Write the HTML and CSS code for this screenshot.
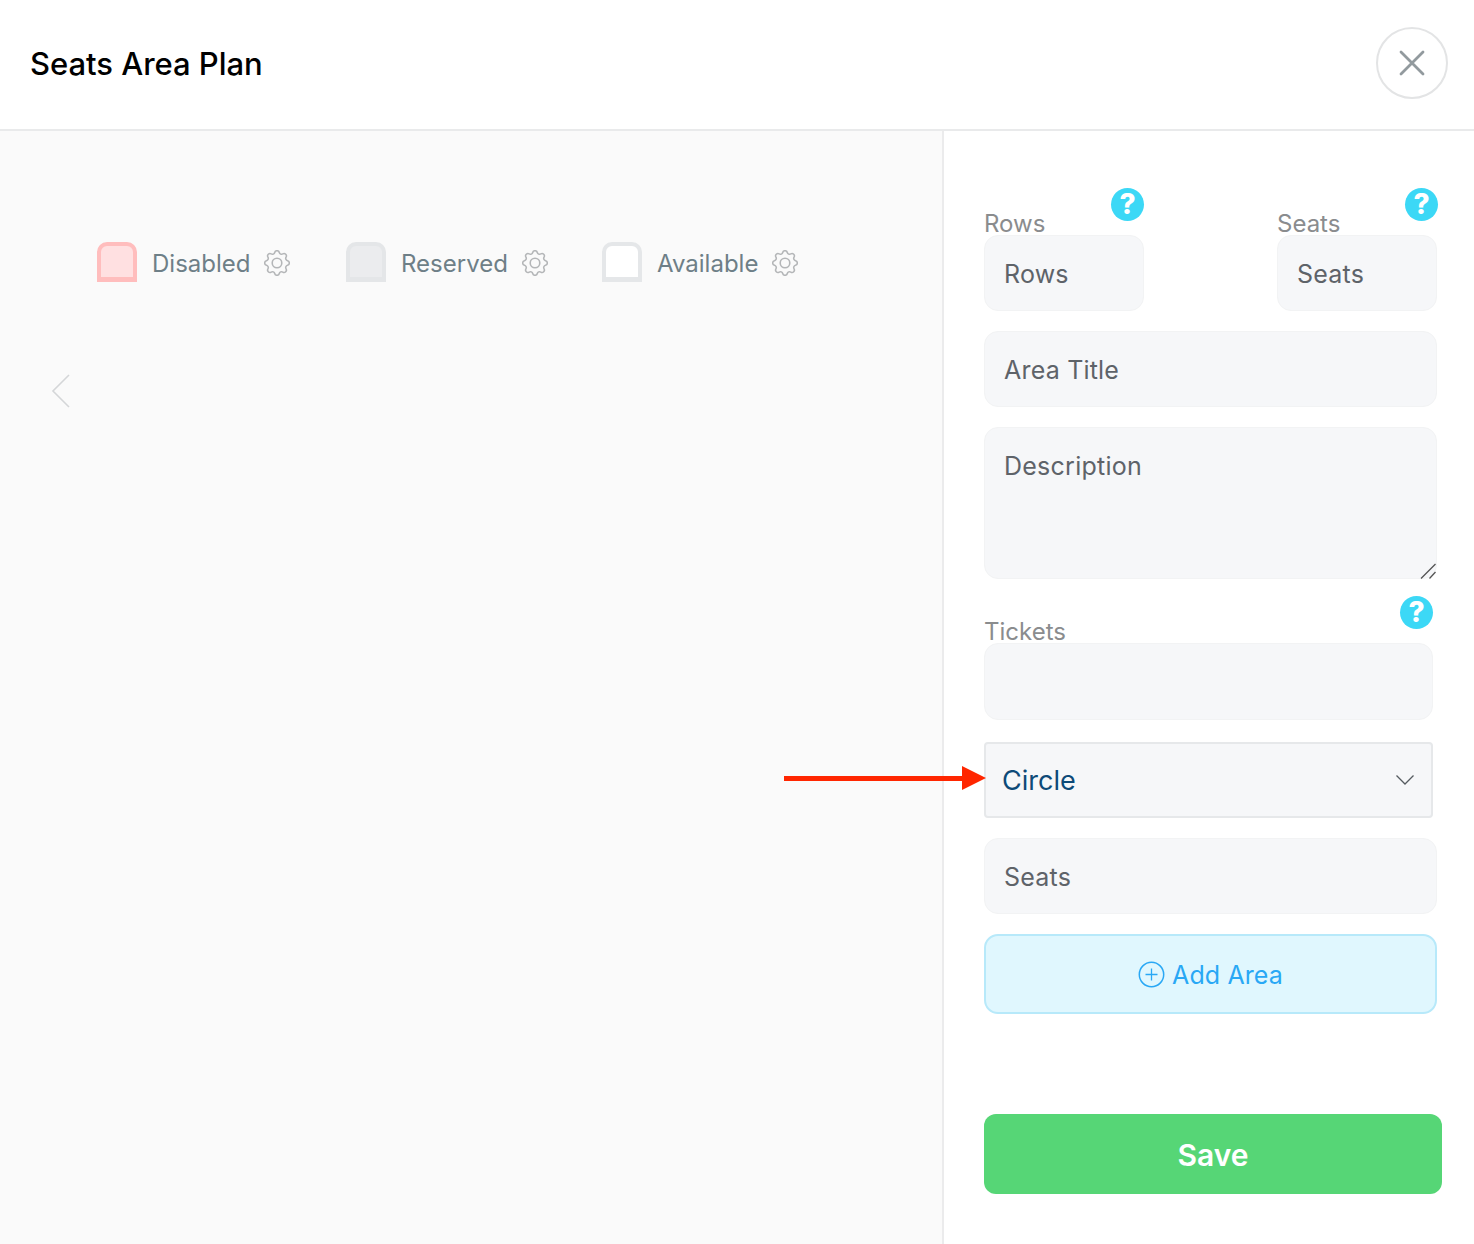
FILE: index.html
```html
<!DOCTYPE html>
<html lang="en">
<head>
<meta charset="utf-8">
<title>Seats Area Plan</title>
<link rel="stylesheet" href="styles.css">
</head>
<body>
<header class="header">
  <h1 class="title">Seats Area Plan</h1>
  <button class="close" aria-label="Close">
    <svg width="26" height="26" viewBox="0 0 26 26"><path d="M2 2 L24 24 M24 2 L2 24" stroke="#929a9e" stroke-width="2.8" stroke-linecap="round" fill="none"/></svg>
  </button>
</header>
<main class="body">
  <section class="canvas">
    <div class="legend">
      <div class="legend-item item-disabled">
        <span class="swatch swatch-disabled"></span><span class="legend-label">Disabled</span>
        <svg class="gear" viewBox="2.5 2.5 19 19"><use href="#gear"/></svg>
      </div>
      <div class="legend-item item-reserved">
        <span class="swatch swatch-reserved"></span><span class="legend-label">Reserved</span>
        <svg class="gear" viewBox="2.5 2.5 19 19"><use href="#gear"/></svg>
      </div>
      <div class="legend-item item-available">
        <span class="swatch swatch-available"></span><span class="legend-label">Available</span>
        <svg class="gear" viewBox="2.5 2.5 19 19"><use href="#gear"/></svg>
      </div>
    </div>
    <svg class="prev" width="20" height="34" viewBox="0 0 20 34"><path d="M18 1 L2 17 L18 33" stroke="#d4d6d8" stroke-width="1.6" fill="none"/></svg>
    <svg class="arrow" width="202" height="24" viewBox="0 0 202 24"><path d="M0 10 H178 V0 L202 12 L178 24 V15 H0 Z" fill="#ff2600"/></svg>
  </section>
  <aside class="side">
    <div class="pair">
      <div class="small-field">
        <div class="head"><span class="label">Rows</span><span class="help help-flush">?</span></div>
        <div class="input">Rows</div>
      </div>
      <div class="small-field">
        <div class="head"><span class="label">Seats</span><span class="help">?</span></div>
        <div class="input">Seats</div>
      </div>
    </div>
    <div class="input input-full gap-area">Area Title</div>
    <div class="textarea-wrap">
      <textarea class="textarea">Description</textarea>
      <svg class="resizer" width="16" height="16" viewBox="0 0 16 16"><path d="M1 15.5 L15.5 1 M9.5 15.5 L15.5 9" stroke="#555" stroke-width="1.3" fill="none"/></svg>
    </div>
    <div class="tickets">
      <div class="head"><span class="label">Tickets</span><span class="help help-flush">?</span></div>
      <div class="input"></div>
    </div>
    <div class="select"><span>Circle</span>
      <svg width="20" height="12" viewBox="0 0 20 12"><path d="M1.5 1.5 L10 10 L18.5 1.5" stroke="#555b60" stroke-width="1.3" fill="none"/></svg>
    </div>
    <div class="input input-full gap-seats">Seats</div>
    <button class="add">
      <svg width="27" height="27" viewBox="0 0 27 27"><circle cx="13.5" cy="13.5" r="12.2" stroke="#29a8f5" stroke-width="1.5" fill="none"/><path d="M13.5 7.5 V19.5 M7.5 13.5 H19.5" stroke="#29a8f5" stroke-width="1.3"/></svg>
      <span class="add-label">Add Area</span>
    </button>
    <button class="save">Save</button>
  </aside>
</main>
<svg class="defs" width="0" height="0">
  <defs>
    <g id="gear" fill="none" stroke="#b4b6b8" stroke-width="1.15" stroke-linejoin="round">
      <circle cx="12" cy="12" r="3.5"/>
      <path d="M10.325 4.317c.426-1.756 2.924-1.756 3.35 0a1.724 1.724 0 002.573 1.066c1.543-.94 3.31.826 2.37 2.37a1.724 1.724 0 001.065 2.572c1.756.426 1.756 2.924 0 3.35a1.724 1.724 0 00-1.066 2.573c.94 1.543-.826 3.31-2.37 2.37a1.724 1.724 0 00-2.572 1.065c-.426 1.756-2.924 1.756-3.35 0a1.724 1.724 0 00-2.573-1.066c-1.543.94-3.31-.826-2.37-2.37a1.724 1.724 0 00-1.065-2.572c-1.756-.426-1.756-2.924 0-3.35a1.724 1.724 0 001.066-2.573c-.94-1.543.826-3.31 2.37-2.37.996.608 2.296.07 2.572-1.065z"/>
    </g>
  </defs>
</svg>
</body>
</html>
```

FILE: styles.css
```css
* { box-sizing: border-box; }
html, body { margin: 0; padding: 0; }
body {
  width: 1474px;
  height: 1244px;
  overflow: hidden;
  background: #fff;
  font-family: Inter, "Liberation Sans", sans-serif;
}
button { font-family: inherit; cursor: pointer; }
.defs { position: absolute; }

.header {
  height: 131px;
  padding: 27px 26px 0 30px;
  display: flex;
  justify-content: space-between;
  align-items: flex-start;
  border-bottom: 2px solid #e9eaeb;
}
.title {
  margin: 16px 0 0;
  font-size: 31px;
  line-height: 42px;
  font-weight: 500;
  color: #000;
  letter-spacing: -0.03px;
}
.close {
  width: 72px;
  height: 72px;
  border: 2px solid #e3e4e5;
  border-radius: 50%;
  background: #fff;
  padding: 0;
  display: flex;
  align-items: center;
  justify-content: center;
}

.body { display: flex; height: 1113px; }

.canvas {
  position: relative;
  width: 944px;
  background: #fafafa;
  border-right: 2px solid #ebebec;
  padding: 111px 0 0 97px;
}
.legend { display: flex; align-items: center; }
.legend-item { display: flex; align-items: center; height: 40px; }
.item-disabled { width: 249px; }
.item-reserved { width: 256px; }
.swatch {
  width: 40px;
  height: 40px;
  border: 4px solid;
  border-bottom-width: 5px;
  border-radius: 10px 10px 0 0;
}
.swatch-disabled { background: #ffe0e1; border-color: #ffbdbd; }
.swatch-reserved { background: #ebecee; border-color: #e4e6e8; }
.swatch-available { background: #fff; border-color: #e5e7e9; }
.legend-label {
  margin-left: 15px;
  padding-top: 3px;
  font-size: 24px;
  line-height: 37px;
  color: #6e7f87;
}
.gear { width: 26px; height: 26px; margin: 2px 0 0 14px; }
.prev { position: absolute; left: 51px; top: 243px; }
.arrow { position: absolute; left: 784px; top: 635px; z-index: 2; }

.side { width: 530px; padding: 57px 37px 0 40px; display: flex; flex-direction: column; align-items: flex-start; }
.pair { width: 453px; display: flex; justify-content: space-between; }
.small-field { width: 160px; }
.head { height: 47px; display: flex; justify-content: space-between; align-items: flex-start; }
.label {
  align-self: flex-end;
  font-size: 24px;
  line-height: 24px;
  margin-bottom: -1px;
  color: #8a8c8e;
}
.help {
  width: 33px;
  height: 33px;
  margin-right: -1px;
  border-radius: 50%;
  background: #3cd8f6;
  color: #fff;
  font-size: 28px;
  line-height: 33px;
  font-weight: 800;
  text-align: center;
}
.help-flush { margin-right: 0; }
.input {
  height: 76px;
  padding: 0 19px;
  background: #f6f7f9;
  border: 1px solid #f2f3f4;
  border-radius: 14px;
  font-size: 25px;
  line-height: 76px;
  letter-spacing: 0.2px;
  color: #5e6369;
}
.input-full { width: 453px; }
.gap-area { margin-top: 20px; }
.textarea-wrap { position: relative; width: 453px; height: 152px; margin-top: 20px; }
.textarea {
  display: block;
  width: 100%;
  height: 100%;
  padding: 20px 19px;
  background: #f6f7f9;
  border: 1px solid #f2f3f4;
  border-radius: 14px;
  outline: none;
  resize: none;
  font-family: inherit;
  font-size: 25px;
  line-height: 36px;
  letter-spacing: 0.25px;
  color: #5e6369;
}
.resizer { position: absolute; right: 1px; bottom: 0; }
.tickets { width: 449px; margin-top: 17px; }
.tickets .input { height: 77px; }
.select {
  width: 449px;
  height: 76px;
  margin-top: 22px;
  padding: 0 16px;
  display: flex;
  align-items: center;
  justify-content: space-between;
  background: #f6f7f9;
  border: 2px solid #e6e8ea;
  border-radius: 4px;
  font-size: 27px;
  color: #0d4a78;
}
.gap-seats { margin-top: 20px; }
.add {
  width: 453px;
  height: 80px;
  margin-top: 20px;
  display: flex;
  align-items: center;
  justify-content: center;
  gap: 7px;
  padding: 0;
  background: #e0f7fe;
  border: 2px solid #b7e9fa;
  border-radius: 14px;
  font-size: 25px;
  letter-spacing: 0.1px;
  color: #29a8f5;
}
.add-label { padding-top: 2px; }
.save {
  width: 458px;
  height: 80px;
  margin-top: 100px;
  border: 0;
  border-radius: 12px;
  background: #56d676;
  color: #fff;
  font-size: 30px;
  font-weight: 600;
  padding: 2px 0 0;
}
```
